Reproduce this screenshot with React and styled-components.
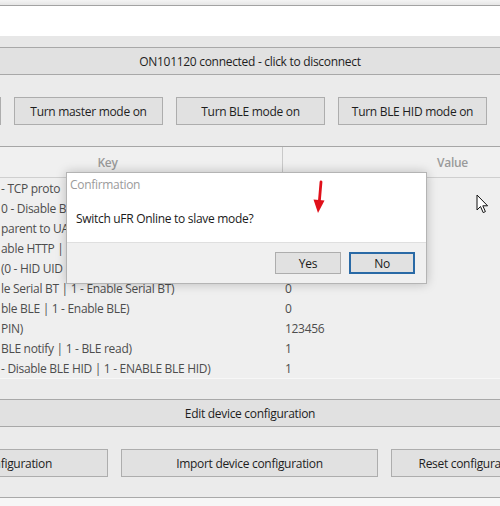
import React from "react";
import styled, { createGlobalStyle } from "styled-components";

const GlobalStyle = createGlobalStyle`
  html, body { margin: 0; padding: 0; }
  body {
    background: #f6f6f6;
    font-family: "Open Sans", "Noto Sans", "Liberation Sans", sans-serif;
    font-size: 12px;
    letter-spacing: -0.3px;
    overflow: hidden;
  }
`;

const Window = styled.div`
  position: relative;
  width: 500px;
  height: 498px;
  box-sizing: border-box;
  background: #ebebeb;
  border-bottom: 1px solid #a9a9a9;
  box-shadow: 0 2px 4px rgba(0, 0, 0, 0.12);
  overflow: hidden;
  display: flex;
  flex-direction: column;
`;

const TopStrip = styled.div`
  height: 6px;
  box-sizing: border-box;
  background: linear-gradient(#f4f4f4, #e6e6e6);
  border-bottom: 1px solid #a3a3a3;
`;

const InputArea = styled.div`
  height: 30px;
  background: #ffffff;
`;

const Band = styled.div`
  height: 11px;
  background: #e7e7e7;
`;

const WideBar = styled.div`
  height: 28px;
  box-sizing: border-box;
  margin: ${(p) => p.$top || 0}px -2px 0;
  background: #e1e1e1;
  border-top: 1px solid #a8a8a8;
  border-bottom: 1px solid #a8a8a8;
  display: flex;
  align-items: center;
  justify-content: center;
  color: #1e1e1e;
  flex-shrink: 0;
`;

const ButtonRow = styled.div`
  display: flex;
  gap: 13px;
  margin-top: ${(p) => p.$top}px;
  margin-left: ${(p) => p.$left}px;
  flex-shrink: 0;
`;

const Button = styled.div`
  width: ${(p) => p.$w}px;
  height: 28px;
  box-sizing: border-box;
  flex-shrink: 0;
  background: #e1e1e1;
  border: 1px solid #adadad;
  display: flex;
  align-items: center;
  justify-content: center;
  color: #1e1e1e;
  white-space: nowrap;
  overflow: hidden;
`;

const Table = styled.div`
  margin-top: 21px;
  margin-left: -67px;
  width: 700px;
  flex-shrink: 0;
  background: #efefef;
  border-bottom: 1px solid #f7f7f7;
`;

const HeaderRow = styled.div`
  display: grid;
  grid-template-columns: 349px 346px;
  height: 32px;
  box-sizing: border-box;
  border-top: 1px solid #a6a6a6;
  border-bottom: 1px solid #cfcfcf;
  background: #f0f0f0;
`;

const HeaderCell = styled.div`
  display: flex;
  align-items: center;
  justify-content: center;
  color: #9a9a9a;
  font-weight: 600;
  padding-right: ${(p) => (p.$value ? 6 : 0)}px;
  border-left: ${(p) => (p.$value ? "1px solid #c9c9c9" : "none")};
`;

const Row = styled.div`
  display: grid;
  grid-template-columns: 352px 1fr;
  height: 20px;
  align-items: center;
  color: #4d4d4d;
  white-space: nowrap;
`;

const RowKey = styled.div`
  overflow: hidden;
  padding-left: 68px;
`;

const ValueCell = styled.div`
  padding-left: 0;
`;

const Dialog = styled.div`
  position: absolute;
  left: 66px;
  top: 172px;
  width: 361px;
  height: 112px;
  box-sizing: border-box;
  background: #ffffff;
  border: 1px solid #b4b4b4;
  box-shadow: 0 0 10px rgba(0, 0, 0, 0.22);
  display: flex;
  flex-direction: column;
`;

const DialogTitle = styled.div`
  height: 23px;
  padding-left: 3px;
  display: flex;
  align-items: center;
  color: #9b9b9b;
`;

const DialogBody = styled.div`
  flex: 1;
  display: flex;
  align-items: center;
  padding-left: 9px;
  padding-bottom: 1px;
  color: #1a1a1a;
`;

const DialogFooter = styled.div`
  height: 41px;
  box-sizing: border-box;
  background: #f0f0f0;
  border-top: 1px solid #dfdfdf;
  display: flex;
  justify-content: flex-end;
  align-items: flex-start;
  gap: 8px;
  padding: 9px 11px 0 0;
`;

const DialogButton = styled.div`
  width: 66px;
  height: 22px;
  box-sizing: border-box;
  background: #e1e1e1;
  border: ${(p) => (p.$focused ? "2px solid #2a6aa6" : "1px solid #adadad")};
  display: flex;
  align-items: center;
  justify-content: center;
  color: #1a1a1a;
`;

const Overlay = styled.svg`
  position: absolute;
  left: ${(p) => p.$x}px;
  top: ${(p) => p.$y}px;
`;

const rows = [
  ["- TCP proto", ""],
  ["0 - Disable B", ""],
  ["parent to UA", ""],
  ["able HTTP | 1", ""],
  ["(0 - HID UID", ""],
  ["le Serial BT | 1 - Enable Serial BT)", "0"],
  ["ble BLE | 1 - Enable BLE)", "0"],
  ["PIN)", "123456"],
  ["BLE notify | 1 - BLE read)", "1"],
  ["- Disable BLE HID | 1 - ENABLE BLE HID)", "1"],
];

export default function App() {
  return (
    <>
      <GlobalStyle />
      <Window>
        <TopStrip />
        <InputArea />
        <Band />
        <WideBar>ON101120 connected - click to disconnect</WideBar>
        <ButtonRow $top={22} $left={-148}>
          <Button $w={149}>Turn slave mode on</Button>
          <Button $w={149}>Turn master mode on</Button>
          <Button $w={149}>Turn BLE mode on</Button>
          <Button $w={149}>Turn BLE HID mode on</Button>
          <Button $w={149}>Turn mode off</Button>
        </ButtonRow>
        <Table>
          <HeaderRow>
            <HeaderCell>Key</HeaderCell>
            <HeaderCell $value>Value</HeaderCell>
          </HeaderRow>
          {rows.map(([k, v], i) => (
            <Row key={i}>
              <RowKey>{k}</RowKey>
              <ValueCell>{v}</ValueCell>
            </Row>
          ))}
        </Table>
        <WideBar $top={20}>Edit device configuration</WideBar>
        <ButtonRow $top={22} $left={-149}>
          <Button $w={257}>Export device configuration</Button>
          <Button $w={257}>Import device configuration</Button>
          <Button $w={257}>Reset configuration to factory defaults</Button>
        </ButtonRow>

        <Dialog>
          <DialogTitle>Confirmation</DialogTitle>
          <DialogBody>Switch uFR Online to slave mode?</DialogBody>
          <DialogFooter>
            <DialogButton>Yes</DialogButton>
            <DialogButton $focused>No</DialogButton>
          </DialogFooter>
        </Dialog>

        <Overlay $x={311} $y={180} width="16" height="36" viewBox="0 0 16 36">
          <path d="M10 2 L8.2 23" stroke="#e0101a" strokeWidth="2.8" strokeLinecap="round" fill="none" />
          <path d="M2.5 19.5 L13.5 20.5 L7 33 Z" fill="#e0101a" />
        </Overlay>

        <Overlay $x={476} $y={194} width="14" height="21" viewBox="0 0 14 21">
          <path
            d="M1 1 L1 16 L4.5 12.5 L7.2 18.6 L9.4 17.6 L6.8 11.8 L11.6 11.8 Z"
            fill="#ffffff"
            stroke="#111111"
            strokeWidth="1"
            strokeLinejoin="round"
          />
        </Overlay>
      </Window>
    </>
  );
}
